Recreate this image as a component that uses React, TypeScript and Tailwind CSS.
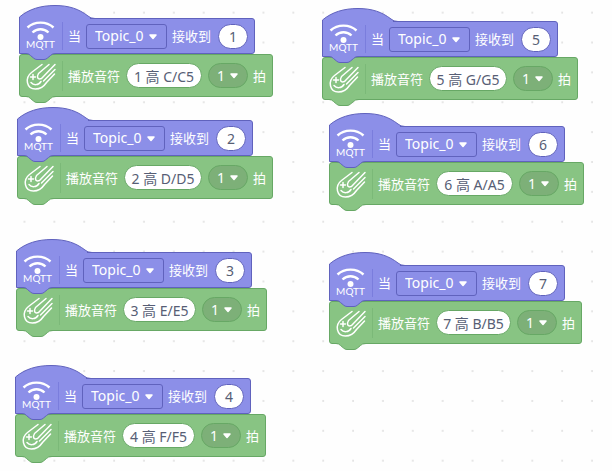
import React from "react";

type Stack = {
  id: string;
  place: string;
  note: string;
  noteWidth: string;
};

const stacks: Stack[] = [
  { id: "1", place: "left-[19px] top-[5px]", note: "1 高 C/C5", noteWidth: "w-[76px]" },
  { id: "2", place: "left-[17px] top-[107px]", note: "2 高 D/D5", noteWidth: "w-[78px]" },
  { id: "3", place: "left-[16px] top-[239px]", note: "3 高 E/E5", noteWidth: "w-[73px]" },
  { id: "4", place: "left-[15px] top-[365px]", note: "4 高 F/F5", noteWidth: "w-[73px]" },
  { id: "5", place: "left-[322px] top-[8px]", note: "5 高 G/G5", noteWidth: "w-[78px]" },
  { id: "6", place: "left-[329px] top-[113px]", note: "6 高 A/A5", noteWidth: "w-[77px]" },
  { id: "7", place: "left-[329px] top-[252px]", note: "7 高 B/B5", noteWidth: "w-[75px]" },
];

function Hat() {
  return (
    <svg className="-mb-px block h-[14px] w-[76px]" viewBox="0 0 76 14" aria-hidden="true">
      <path d="M0.5 14V12C10 4 22 0.5 36 0.5C50 0.5 60 4 69 11Q71.5 13.5 76 13.5V14Z" fill="#8c8fe8" />
      <path d="M0.5 14V12C10 4 22 0.5 36 0.5C50 0.5 60 4 69 11Q71.5 13.5 76 13.5" fill="none" stroke="#6062bd" />
    </svg>
  );
}

function Tab({ fill, stroke }: { fill: string; stroke: string }) {
  return (
    <svg className="absolute top-full left-[6px] z-10 h-[8px] w-[30px]" viewBox="0 0 30 8" aria-hidden="true">
      <path d="M0 0H30V0.5C27 0.5 26 1 24.5 2.5L21.5 5Q20 6.5 18 6.5H11Q9 6.5 7.5 5L4.5 2.5Q3 0.5 0 0.5Z" fill={fill} />
      <path d="M0 0.5Q3 0.5 4.5 2.5L7.5 5Q9 6.5 11 6.5H18Q20 6.5 21.5 5L24.5 2.5Q26 0.5 30 0.5" fill="none" stroke={stroke} />
    </svg>
  );
}

function Caret({ place }: { place: string }) {
  return (
    <svg className={`pointer-events-none absolute h-[6px] w-[8px] ${place}`} viewBox="0 0 8 6" aria-hidden="true">
      <path d="M1 1H7L4 4.5Z" fill="#fff" stroke="#fff" strokeWidth="1.5" strokeLinejoin="round" />
    </svg>
  );
}

function MqttIcon() {
  return (
    <svg className="h-[36px] w-[32px]" viewBox="0 0 32 36" role="img" aria-label="MQTT">
      <g fill="none" stroke="#fff" strokeWidth="2.4">
        <path d="M2.5 9.5C9.5 3 21.500 3 28.5 9.5" />
        <path d="M7.500 14.5C12 10.200 19 10.200 23.500 14.5" />
      </g>
      <circle cx="15.500" cy="19" r="3" fill="#fff" />
      <text x="15.500" y="30" textAnchor="middle" fontFamily="Lato, sans-serif" fontSize="10" fill="#fff">
        MQTT
      </text>
    </svg>
  );
}

function MusicIcon() {
  return (
    <svg className="h-[30px] w-[32px]" viewBox="0 0 32 30" aria-hidden="true">
      <g fill="none" stroke="#fff" strokeWidth="1.5" strokeLinecap="round" strokeLinejoin="round">
        <path d="M17 3.5L6.5 11.5C-0.5 17 1.5 28 10.5 28C16.5 28 19.5 24.5 21.5 21.5L29.5 13" />
        <path d="M24 3.5L13.5 12.5C11.5 16 12.5 19 16.5 17.5L30 3.5" />
        <path d="M30 8.5L18.5 20" />
        <path d="M8 13.5V18.5M5.5 16H10.5" />
        <path d="M6 21.5C8.5 24.5 13.5 24.5 16 20.5" />
      </g>
    </svg>
  );
}

function NoteStack({ id, place, note, noteWidth }: Stack) {
  return (
    <article className={`absolute flex flex-col items-start ${place}`}>
      <Hat />
      <div className="relative flex h-[36px] items-center rounded-r-[3px] border border-[#6062bd] bg-[#8c8fe8] pr-[6px]">
        <span className="absolute -top-px left-0 h-px w-[70px] bg-[#8c8fe8]" />
        <div className="flex w-[42px] justify-center">
          <MqttIcon />
        </div>
        <span className="h-[28px] w-px bg-[#7a7ddd]" />
        <span className="ml-[5px]">当</span>
        <div className="relative ml-[5px] h-[25px] w-[81px]">
          <select
            aria-label="主题"
            className="h-full w-full appearance-none rounded-[3px] border border-[#6062bd] bg-[#8c8fe8] pl-[8px] text-[14px] text-white outline-none"
          >
            <option>Topic_0</option>
          </select>
          <Caret place="left-[63px] top-[10px]" />
        </div>
        <span className="ml-[5px]">接收到</span>
        <input
          aria-label="消息"
          defaultValue={id}
          className="ml-[7px] h-[25px] w-[30px] rounded-full border border-[#6062bd] bg-white text-center text-[14px] text-[#575e75] outline-none"
        />
        <Tab fill="#8c8fe8" stroke="#6062bd" />
      </div>
      <div className="relative flex h-[43px] items-center rounded-[3px] border border-[#67a865] bg-[#88c483] pr-[6px]">
        <div className="flex w-[42px] justify-center">
          <MusicIcon />
        </div>
        <span className="h-[30px] w-px bg-[#7bb978]" />
        <span className="ml-[5px]">播放音符</span>
        <input
          aria-label="音符"
          defaultValue={note}
          className={`ml-[6px] h-[25px] rounded-full border border-[#67a865] bg-white text-center text-[14px] text-[#575e75] outline-none ${noteWidth}`}
        />
        <div className="relative ml-[6px] h-[25px] w-[40px]">
          <select
            aria-label="节拍"
            className="h-full w-full appearance-none rounded-full border border-[#67a865] bg-[#7db078] pl-[8px] text-[14px] text-white outline-none"
          >
            <option>1</option>
          </select>
          <Caret place="left-[22px] top-[10px]" />
        </div>
        <span className="ml-[5px]">拍</span>
        <Tab fill="#88c483" stroke="#67a865" />
      </div>
    </article>
  );
}

export default function App() {
  return (
    <main className="relative h-screen w-full overflow-hidden bg-[#fefefe] font-['Noto_Sans','Noto_Sans_CJK_SC',sans-serif] text-[13px] leading-[20px] whitespace-nowrap text-white">
      <svg className="absolute inset-0 h-full w-full" aria-hidden="true">
        <defs>
          <pattern id="grid" x="9.5" y="-2.3" width="29.87" height="29.87" patternUnits="userSpaceOnUse">
            <circle cx="15" cy="15" r="1" fill="#dedede" />
          </pattern>
        </defs>
        <rect width="100%" height="100%" fill="url(#grid)" />
      </svg>
      {stacks.map((stack) => (
        <NoteStack key={stack.id} {...stack} />
      ))}
    </main>
  );
}
